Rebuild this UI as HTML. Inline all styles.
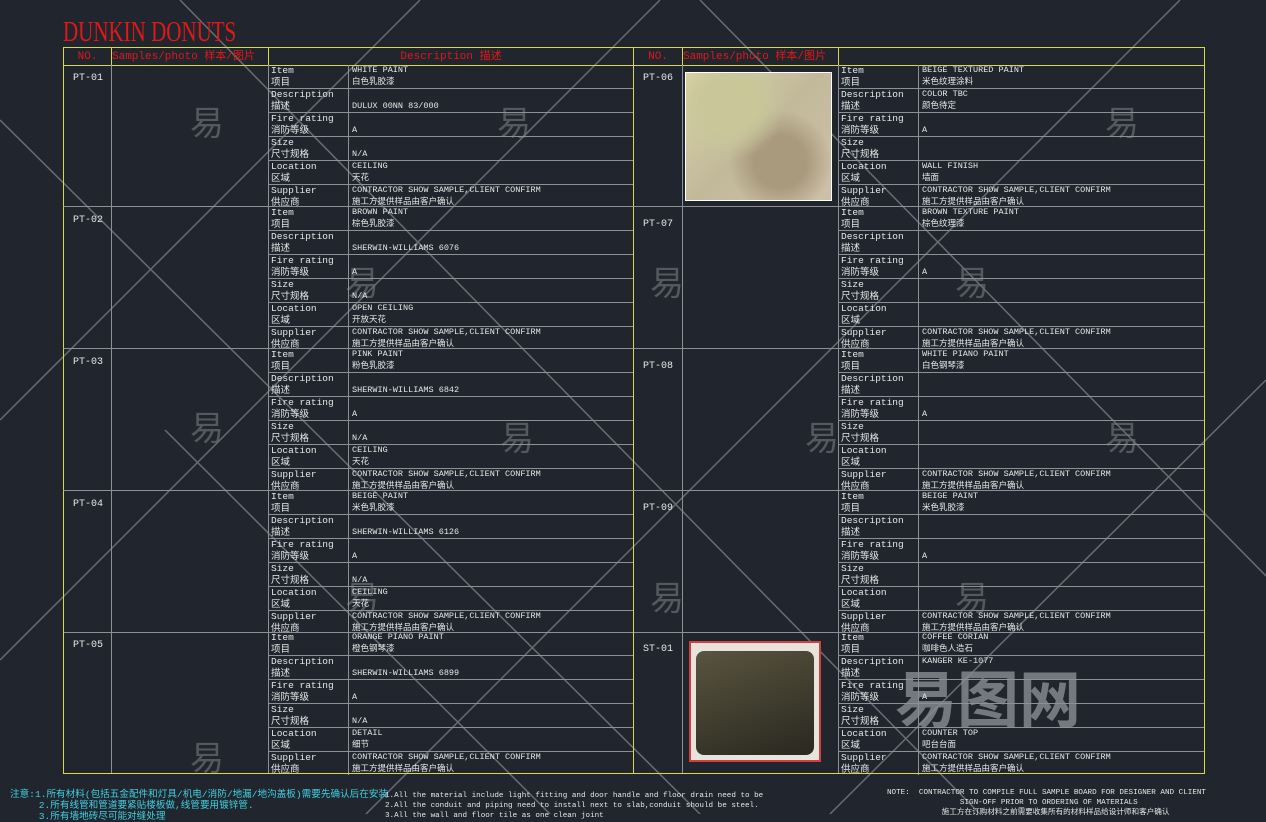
<!DOCTYPE html>
<html><head><meta charset="utf-8"><style>
*{margin:0;padding:0;box-sizing:border-box}
body{width:1266px;height:814px;background:#21262e;overflow:hidden;position:relative;font-family:"Liberation Mono","Noto Sans CJK SC",monospace;color:#e6e6e6}
.title{position:absolute;left:63px;top:17px;font-family:"Liberation Serif",serif;font-size:28px;color:#e01818;transform:scaleX(.75);transform-origin:left top;white-space:nowrap}
.hdr{position:absolute;top:47px;height:19px;display:flex;border:1px solid #d8d84a;color:#e01818;font-size:11px;line-height:18px}
.hdr div{border-right:1px solid #d8d84a;white-space:nowrap;overflow:hidden}
.blk{position:absolute;height:142px;display:flex;border-left:1px solid #d8d84a;border-right:1px solid #d8d84a;border-bottom:1px solid #8c9196}
.no{width:48px;border-right:1px solid #8c9196;font-size:10px;padding:8px 0 0 9px}
.ph{width:157px;border-right:1px solid #8c9196;position:relative}
.d{flex:1;display:flex;flex-direction:column}
.r{flex:1;display:flex;border-bottom:1px solid #8c9196;font-size:9.5px;line-height:11.5px}
.r:last-child{border-bottom:none}
.l{width:80px;border-right:1px solid #8c9196;padding-left:2px;white-space:nowrap;overflow:hidden}
.v{flex:1;padding-left:3px;white-space:nowrap;overflow:hidden;font-size:8.5px}
.v b,.l b{font-weight:normal;display:block;height:11.5px}
.bot{position:absolute;left:63px;top:773px;width:1142px;height:1px;background:#d8d84a}
svg{position:absolute;left:0;top:0}
.note{position:absolute;font-size:8px;white-space:nowrap;line-height:10px}
</style></head><body>
<svg width="1266" height="814">
<g stroke="#7a7f86" stroke-width="1.5" opacity=".8">
<line x1="180" y1="0" x2="980" y2="814"/><line x1="700" y1="0" x2="1266" y2="576"/>
<line x1="0" y1="120" x2="700" y2="814"/><line x1="1180" y1="0" x2="366" y2="814"/>
<line x1="660" y1="0" x2="0" y2="660"/><line x1="420" y1="0" x2="0" y2="420"/>
<line x1="1266" y1="380" x2="830" y2="814"/><line x1="165" y1="430" x2="550" y2="814"/>
</g>
<g fill="#6a6e74" font-family="Noto Sans CJK SC,sans-serif" font-size="34" opacity=".7">
<text x="190" y="135">易</text><text x="497" y="135">易</text><text x="1105" y="135">易</text>
<text x="650" y="295">易</text><text x="955" y="295">易</text><text x="345" y="295">易</text>
<text x="190" y="440">易</text><text x="500" y="450">易</text><text x="805" y="450">易</text><text x="1105" y="450">易</text>
<text x="650" y="610">易</text><text x="955" y="610">易</text><text x="345" y="610">易</text>
<text x="190" y="770">易</text>
</g>
<text x="895" y="722" fill="#8a8d92" font-family="Noto Sans CJK SC,sans-serif" font-size="62" font-weight="bold" opacity=".8">易图网</text>
</svg>
<div class="title">DUNKIN DONUTS</div>

<div class="hdr" style="left:63px;width:571px"><div style="width:48px;text-align:center">NO.</div><div style="width:157px">Samples/photo 样本/图片</div><div style="flex:1;text-align:center;border:none">Description 描述</div></div>
<div class="hdr" style="left:633px;width:572px"><div style="width:49px;text-align:center">NO.</div><div style="width:156px">Samples/photo 样本/图片</div><div style="flex:1;border:none"></div></div>

<!-- LEFT -->
<div class="blk" style="left:63px;top:65px;width:571px"><div class="no">PT-01</div><div class="ph"></div><div class="d">
<div class="r"><div class="l"><b>Item</b><b>项目</b></div><div class="v"><b>WHITE PAINT</b><b>白色乳胶漆</b></div></div>
<div class="r"><div class="l"><b>Description</b><b>描述</b></div><div class="v"><b></b><b>DULUX 00NN 83/000</b></div></div>
<div class="r"><div class="l"><b>Fire rating</b><b>消防等级</b></div><div class="v"><b></b><b>A</b></div></div>
<div class="r"><div class="l"><b>Size</b><b>尺寸规格</b></div><div class="v"><b></b><b>N/A</b></div></div>
<div class="r"><div class="l"><b>Location</b><b>区域</b></div><div class="v"><b>CEILING</b><b>天花</b></div></div>
<div class="r"><div class="l"><b>Supplier</b><b>供应商</b></div><div class="v"><b>CONTRACTOR SHOW SAMPLE,CLIENT CONFIRM</b><b>施工方提供样品由客户确认</b></div></div>
</div></div>
<div class="blk" style="left:63px;top:207px;width:571px"><div class="no">PT-02</div><div class="ph"></div><div class="d">
<div class="r"><div class="l"><b>Item</b><b>项目</b></div><div class="v"><b>BROWN PAINT</b><b>棕色乳胶漆</b></div></div>
<div class="r"><div class="l"><b>Description</b><b>描述</b></div><div class="v"><b></b><b>SHERWIN-WILLIAMS 6076</b></div></div>
<div class="r"><div class="l"><b>Fire rating</b><b>消防等级</b></div><div class="v"><b></b><b>A</b></div></div>
<div class="r"><div class="l"><b>Size</b><b>尺寸规格</b></div><div class="v"><b></b><b>N/A</b></div></div>
<div class="r"><div class="l"><b>Location</b><b>区域</b></div><div class="v"><b>OPEN CEILING</b><b>开放天花</b></div></div>
<div class="r"><div class="l"><b>Supplier</b><b>供应商</b></div><div class="v"><b>CONTRACTOR SHOW SAMPLE,CLIENT CONFIRM</b><b>施工方提供样品由客户确认</b></div></div>
</div></div>
<div class="blk" style="left:63px;top:349px;width:571px"><div class="no">PT-03</div><div class="ph"></div><div class="d">
<div class="r"><div class="l"><b>Item</b><b>项目</b></div><div class="v"><b>PINK PAINT</b><b>粉色乳胶漆</b></div></div>
<div class="r"><div class="l"><b>Description</b><b>描述</b></div><div class="v"><b></b><b>SHERWIN-WILLIAMS 6842</b></div></div>
<div class="r"><div class="l"><b>Fire rating</b><b>消防等级</b></div><div class="v"><b></b><b>A</b></div></div>
<div class="r"><div class="l"><b>Size</b><b>尺寸规格</b></div><div class="v"><b></b><b>N/A</b></div></div>
<div class="r"><div class="l"><b>Location</b><b>区域</b></div><div class="v"><b>CEILING</b><b>天花</b></div></div>
<div class="r"><div class="l"><b>Supplier</b><b>供应商</b></div><div class="v"><b>CONTRACTOR SHOW SAMPLE,CLIENT CONFIRM</b><b>施工方提供样品由客户确认</b></div></div>
</div></div>
<div class="blk" style="left:63px;top:491px;width:571px"><div class="no">PT-04</div><div class="ph"></div><div class="d">
<div class="r"><div class="l"><b>Item</b><b>项目</b></div><div class="v"><b>BEIGE PAINT</b><b>米色乳胶漆</b></div></div>
<div class="r"><div class="l"><b>Description</b><b>描述</b></div><div class="v"><b></b><b>SHERWIN-WILLIAMS 6126</b></div></div>
<div class="r"><div class="l"><b>Fire rating</b><b>消防等级</b></div><div class="v"><b></b><b>A</b></div></div>
<div class="r"><div class="l"><b>Size</b><b>尺寸规格</b></div><div class="v"><b></b><b>N/A</b></div></div>
<div class="r"><div class="l"><b>Location</b><b>区域</b></div><div class="v"><b>CEILING</b><b>天花</b></div></div>
<div class="r"><div class="l"><b>Supplier</b><b>供应商</b></div><div class="v"><b>CONTRACTOR SHOW SAMPLE,CLIENT CONFIRM</b><b>施工方提供样品由客户确认</b></div></div>
</div></div>
<div class="blk" style="left:63px;top:632px;width:571px"><div class="no">PT-05</div><div class="ph"></div><div class="d">
<div class="r"><div class="l"><b>Item</b><b>项目</b></div><div class="v"><b>ORANGE PIANO PAINT</b><b>橙色钢琴漆</b></div></div>
<div class="r"><div class="l"><b>Description</b><b>描述</b></div><div class="v"><b></b><b>SHERWIN-WILLIAMS 6899</b></div></div>
<div class="r"><div class="l"><b>Fire rating</b><b>消防等级</b></div><div class="v"><b></b><b>A</b></div></div>
<div class="r"><div class="l"><b>Size</b><b>尺寸规格</b></div><div class="v"><b></b><b>N/A</b></div></div>
<div class="r"><div class="l"><b>Location</b><b>区域</b></div><div class="v"><b>DETAIL</b><b>细节</b></div></div>
<div class="r"><div class="l"><b>Supplier</b><b>供应商</b></div><div class="v"><b>CONTRACTOR SHOW SAMPLE,CLIENT CONFIRM</b><b>施工方提供样品由客户确认</b></div></div>
</div></div>

<!-- RIGHT -->
<div class="blk" style="left:633px;top:65px;width:572px"><div class="no" style="width:49px">PT-06</div><div class="ph" style="width:156px"><div style="position:absolute;left:2px;top:7px;width:147px;height:129px;border:1px solid #fff;background:radial-gradient(circle at 30% 25%,#c9c69a 0 20%,transparent 40%),radial-gradient(circle at 65% 70%,#a99a7e 0 20%,transparent 40%),linear-gradient(135deg,#d8d4a4,#c2b99a 50%,#cfc0a8)"></div></div><div class="d">
<div class="r"><div class="l"><b>Item</b><b>项目</b></div><div class="v"><b>BEIGE TEXTURED  PAINT</b><b>米色纹理涂料</b></div></div>
<div class="r"><div class="l"><b>Description</b><b>描述</b></div><div class="v"><b>COLOR TBC</b><b>颜色待定</b></div></div>
<div class="r"><div class="l"><b>Fire rating</b><b>消防等级</b></div><div class="v"><b></b><b>A</b></div></div>
<div class="r"><div class="l"><b>Size</b><b>尺寸规格</b></div><div class="v"><b></b><b></b></div></div>
<div class="r"><div class="l"><b>Location</b><b>区域</b></div><div class="v"><b>WALL FINISH</b><b>墙面</b></div></div>
<div class="r"><div class="l"><b>Supplier</b><b>供应商</b></div><div class="v"><b>CONTRACTOR SHOW SAMPLE,CLIENT CONFIRM</b><b>施工方提供样品由客户确认</b></div></div>
</div></div>
<div class="blk" style="left:633px;top:207px;width:572px"><div class="no" style="width:49px;padding-top:12px">PT-07</div><div class="ph" style="width:156px"></div><div class="d">
<div class="r"><div class="l"><b>Item</b><b>项目</b></div><div class="v"><b>BROWN TEXTURE PAINT</b><b>棕色纹理漆</b></div></div>
<div class="r"><div class="l"><b>Description</b><b>描述</b></div><div class="v"></div></div>
<div class="r"><div class="l"><b>Fire rating</b><b>消防等级</b></div><div class="v"><b></b><b>A</b></div></div>
<div class="r"><div class="l"><b>Size</b><b>尺寸规格</b></div><div class="v"></div></div>
<div class="r"><div class="l"><b>Location</b><b>区域</b></div><div class="v"></div></div>
<div class="r"><div class="l"><b>Supplier</b><b>供应商</b></div><div class="v"><b>CONTRACTOR SHOW SAMPLE,CLIENT CONFIRM</b><b>施工方提供样品由客户确认</b></div></div>
</div></div>
<div class="blk" style="left:633px;top:349px;width:572px"><div class="no" style="width:49px;padding-top:12px">PT-08</div><div class="ph" style="width:156px"></div><div class="d">
<div class="r"><div class="l"><b>Item</b><b>项目</b></div><div class="v"><b>WHITE PIANO PAINT</b><b>白色钢琴漆</b></div></div>
<div class="r"><div class="l"><b>Description</b><b>描述</b></div><div class="v"></div></div>
<div class="r"><div class="l"><b>Fire rating</b><b>消防等级</b></div><div class="v"><b></b><b>A</b></div></div>
<div class="r"><div class="l"><b>Size</b><b>尺寸规格</b></div><div class="v"></div></div>
<div class="r"><div class="l"><b>Location</b><b>区域</b></div><div class="v"></div></div>
<div class="r"><div class="l"><b>Supplier</b><b>供应商</b></div><div class="v"><b>CONTRACTOR SHOW SAMPLE,CLIENT CONFIRM</b><b>施工方提供样品由客户确认</b></div></div>
</div></div>
<div class="blk" style="left:633px;top:491px;width:572px"><div class="no" style="width:49px;padding-top:12px">PT-09</div><div class="ph" style="width:156px"></div><div class="d">
<div class="r"><div class="l"><b>Item</b><b>项目</b></div><div class="v"><b>BEIGE PAINT</b><b>米色乳胶漆</b></div></div>
<div class="r"><div class="l"><b>Description</b><b>描述</b></div><div class="v"></div></div>
<div class="r"><div class="l"><b>Fire rating</b><b>消防等级</b></div><div class="v"><b></b><b>A</b></div></div>
<div class="r"><div class="l"><b>Size</b><b>尺寸规格</b></div><div class="v"></div></div>
<div class="r"><div class="l"><b>Location</b><b>区域</b></div><div class="v"></div></div>
<div class="r"><div class="l"><b>Supplier</b><b>供应商</b></div><div class="v"><b>CONTRACTOR SHOW SAMPLE,CLIENT CONFIRM</b><b>施工方提供样品由客户确认</b></div></div>
</div></div>
<div class="blk" style="left:633px;top:632px;width:572px"><div class="no" style="width:49px;padding-top:12px">ST-01</div><div class="ph" style="width:156px"><div style="position:absolute;left:6px;top:9px;width:132px;height:121px;border:2px solid #d04040;background:#e8e4dc"><div style="position:absolute;left:5px;top:8px;width:118px;height:104px;border-radius:8px;background:linear-gradient(160deg,#5a5440,#3c3a2c 60%,#2a2820)"></div></div></div><div class="d">
<div class="r"><div class="l"><b>Item</b><b>项目</b></div><div class="v"><b>COFFEE CORIAN</b><b>咖啡色人造石</b></div></div>
<div class="r"><div class="l"><b>Description</b><b>描述</b></div><div class="v"><b>KANGER KE-1077</b><b></b></div></div>
<div class="r"><div class="l"><b>Fire rating</b><b>消防等级</b></div><div class="v"><b></b><b>A</b></div></div>
<div class="r"><div class="l"><b>Size</b><b>尺寸规格</b></div><div class="v"></div></div>
<div class="r"><div class="l"><b>Location</b><b>区域</b></div><div class="v"><b>COUNTER TOP</b><b>吧台台面</b></div></div>
<div class="r"><div class="l"><b>Supplier</b><b>供应商</b></div><div class="v"><b>CONTRACTOR SHOW SAMPLE,CLIENT CONFIRM</b><b>施工方提供样品由客户确认</b></div></div>
</div></div>
<div class="bot"></div>

<div class="note" style="left:10px;top:789px;color:#3fd0e0;font-size:9.6px;line-height:11px">注意:1.所有材料(包括五金配件和灯具/机电/消防/地漏/地沟盖板)需要先确认后在安装<br>&nbsp;&nbsp;&nbsp;&nbsp;&nbsp;2.所有线管和管道要紧贴楼板做,线管要用镀锌管.<br>&nbsp;&nbsp;&nbsp;&nbsp;&nbsp;3.所有墙地砖尽可能对缝处理</div>
<div class="note" style="left:385px;top:791px;color:#e6e6e6;font-size:7.6px;line-height:10px">1.All the material include light fitting and door handle and floor drain need to be<br>2.All the conduit and piping need to install next to slab,conduit should be steel.<br>3.All the wall and floor tile as one clean joint</div>
<div class="note" style="left:887px;top:788px;color:#e6e6e6;font-size:7.6px">NOTE:&nbsp;&nbsp;CONTRACTOR TO COMPILE FULL SAMPLE BOARD FOR DESIGNER AND CLIENT<br>&nbsp;&nbsp;&nbsp;&nbsp;&nbsp;&nbsp;&nbsp;&nbsp;&nbsp;&nbsp;&nbsp;&nbsp;&nbsp;&nbsp;&nbsp;&nbsp;SIGN-OFF PRIOR TO ORDERING OF MATERIALS<br>&nbsp;&nbsp;&nbsp;&nbsp;&nbsp;&nbsp;&nbsp;&nbsp;&nbsp;&nbsp;&nbsp;&nbsp;施工方在订购材料之前需要收集所有的材料样品给设计师和客户确认</div>
</body></html>
